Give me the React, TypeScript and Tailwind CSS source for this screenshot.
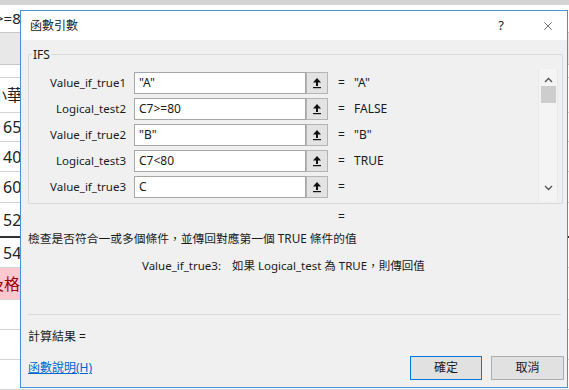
import { X } from 'lucide-react'

const font = { fontFamily: '"Noto Sans", "Noto Sans CJK TC", sans-serif' }

const args = [
  { label: 'Value_if_true1', value: '"A"', result: '"A"' },
  { label: 'Logical_test2', value: 'C7>=80', result: 'FALSE' },
  { label: 'Value_if_true2', value: '"B"', result: '"B"' },
  { label: 'Logical_test3', value: 'C7<80', result: 'TRUE' },
  { label: 'Value_if_true3', value: 'C', result: '' },
]

function CollapseIcon() {
  return (
    <svg width="10" height="12" viewBox="0 0 10 12">
      <path d="M5 1 L1 5.5 H9 Z" fill="#111" />
      <rect x="4" y="5" width="2" height="4" fill="#111" />
      <rect x="1" y="10" width="8" height="1.2" fill="#111" />
    </svg>
  )
}

function Sheet() {
  // spreadsheet behind the dialog, only the left strip shows
  const cells = [
    { h: 'h-[35px]', text: '小華', cls: '-ml-[12px]' },
    { h: 'h-[29px]', text: '65' },
    { h: 'h-[30px]', text: '40' },
    { h: 'h-[31px]', text: '60' },
    { h: 'h-[35px]', text: '52', thick: true },
    { h: 'h-[30px]', text: '54' },
    { h: 'h-[32px]', text: '不及格', cls: '-ml-[31px] text-[#9c0006]', pink: true },
    { h: 'h-[30px]', text: '' },
    { h: 'h-[30px]', text: '' },
    { h: 'h-[30px]', text: '' },
  ]
  return (
    <div className="w-full h-[390px] bg-white overflow-hidden" style={font}>
      <div className="h-[5px] bg-[#d4d4d4]" />
      <div className="h-[28px] flex items-center text-[15px] text-[#222] border-b border-[#c6c6c6]">
        <span className="-ml-[5px]">&gt;=8</span>
      </div>
      <div className="h-[32px] bg-[#e8e8e8] border-b border-[#c6c6c6]" />
      <div className="h-[13px] border-b border-[#d4d4d4]" />
      {cells.map((c, i) => (
        <div
          key={i}
          className={`${c.h} flex items-center text-[16px] text-[#222] pl-[3px] ${c.thick ? 'border-b-2 border-[#333]' : 'border-b border-[#d4d4d4]'}`}
        >
          <div className={`flex items-center h-full ${c.pink ? 'bg-[#ffc7ce] w-[60px] -ml-[3px] pl-[3px]' : ''}`}>
            <span className={`whitespace-nowrap ${c.cls ?? ''}`}>{c.text}</span>
          </div>
        </div>
      ))}
    </div>
  )
}

export default function App() {
  return (
    <div className="relative w-[569px] h-[390px] overflow-hidden bg-white">
      <Sheet />

      <div
        className="absolute left-[20px] top-[10px] w-[548px] h-[378px] border border-[#4a90d9] bg-[#f0f0f0] flex flex-col text-[12px] text-[#1a1a1a]"
        style={font}
      >
        {/* title bar */}
        <div className="h-[29px] bg-white flex items-center pl-[9px] shrink-0">
          <span className="text-[12px]">函數引數</span>
          <span className="ml-auto mr-[37px] text-[13px] text-[#222]">?</span>
          <X className="w-[14px] h-[14px] mr-[12px] text-[#222]" strokeWidth={1.1} />
        </div>

        <div className="flex flex-col pl-[7px] pr-[4px]">
          {/* IFS group */}
          <div className="relative mt-[14px] h-[150px] border border-[#d9d9d9] rounded-[2px] flex">
            <span className="absolute -top-[8px] left-[3px] bg-[#f0f0f0] px-[1px] leading-[16px]">IFS</span>
            <div className="flex-1 flex flex-col gap-[4px] pt-[17px]">
              {args.map((a) => (
                <div key={a.label} className="h-[22px] flex items-center">
                  <div className="w-[97px] text-right text-[11.5px]">{a.label}</div>
                  <div className="ml-[8px] w-[172px] h-[22px] bg-white border border-[#a6a6a6] flex items-center pl-[4px] text-[12px]">
                    {a.value}
                  </div>
                  <div className="w-[22px] h-[22px] bg-[#e3e3e3] border border-[#b4b4b4] flex items-center justify-center">
                    <CollapseIcon />
                  </div>
                  <span className="ml-[10px] w-[16px]">=</span>
                  <span className="text-[12px]">{a.result}</span>
                </div>
              ))}
            </div>
            <div className="w-[20px] mr-[4px] mt-[14px] h-[132px] bg-[#f4f4f4] border-x border-[#e8e8e8] flex flex-col items-center">
              <svg width="9" height="6" viewBox="0 0 9 6" className="mt-[8px]">
                <polyline points="1,5 4.5,1.5 8,5" fill="none" stroke="#555" strokeWidth="1.4" />
              </svg>
              <div className="mt-[3px] w-[15px] h-[17px] bg-[#cdcdcd]" />
              <svg width="9" height="6" viewBox="0 0 9 6" className="mt-auto mb-[10px]">
                <polyline points="1,1 4.5,4.5 8,1" fill="none" stroke="#555" strokeWidth="1.4" />
              </svg>
            </div>
          </div>

          <div className="h-[26px] flex items-center pl-[310px]">=</div>
          <div className="h-[18px] flex items-center text-[11.75px]">檢查是否符合一或多個條件，並傳回對應第一個 TRUE 條件的值</div>
          <div className="mt-[9px] h-[18px] flex items-center pl-[114px] text-[11.5px]">
            <span>Value_if_true3:</span>
            <span className="ml-[11px]">如果 Logical_test 為 TRUE，則傳回值</span>
          </div>

          <div className="mt-[39px] h-px bg-[#dadada] mr-[2px]" />

          <div className="mt-[13px] h-[18px] flex items-center">計算結果 =</div>

          <div className="mt-[10px] flex items-center">
            <a className="text-[#0066cc] underline">函數說明(H)</a>
            <button className="ml-auto w-[72px] h-[24px] bg-[#e1e1e1] border border-[#0078d7] text-[12px]">確定</button>
            <button className="ml-[9px] w-[73px] h-[24px] bg-[#e1e1e1] border border-[#adadad] text-[12px] -mr-[1px]">取消</button>
          </div>
        </div>
      </div>
    </div>
  )
}
